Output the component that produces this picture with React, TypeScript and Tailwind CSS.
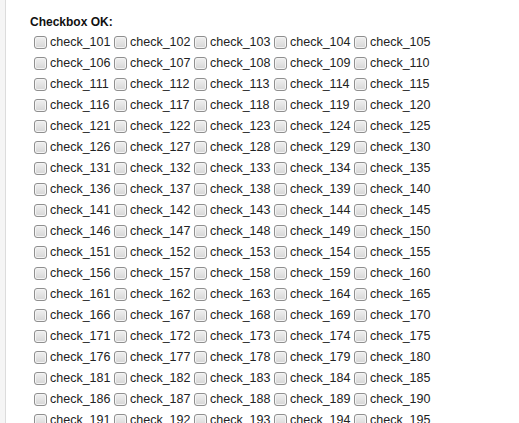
import React from "react";

function Box() {
  return (
    <span className="ml-[4px] mr-[3px] inline-block h-[13px] w-[13px] shrink-0 rounded-[3px] border border-[#8f8f8f] bg-gradient-to-b from-[#f0f0f0] to-[#d6d6d6] shadow-[inset_0_0_0_1px_#f4f4f4]" />
  );
}

export default function App() {
  const rows: number[][] = [];
  for (let r = 0; r < 19; r++) {
    const row: number[] = [];
    for (let c = 0; c < 5; c++) row.push(101 + r * 5 + c);
    rows.push(row);
  }
  return (
    <div
      className="flex h-[423px] w-[519px] overflow-hidden bg-white text-[#222]"
      style={{ fontFamily: '"Liberation Sans", Arial, sans-serif' }}
    >
      <div className="h-full w-[6px] shrink-0 border-r border-[#dcdcdc] bg-[#f5f5f5]" />
      <div className="pl-[24px] pt-[15px]">
        <div className="text-[12px] font-bold leading-[15px] text-[#111]">Checkbox OK:</div>
        <div className="mt-[2px] flex flex-col">
          {rows.map((row, i) => (
            <div key={i} className="grid h-[21px] grid-cols-[repeat(5,80px)] items-center">
              {row.map((n) => (
                <label key={n} className="flex items-center text-[12.5px] leading-[15px] whitespace-nowrap">
                  <Box />
                  <span>check_{n}</span>
                </label>
              ))}
            </div>
          ))}
        </div>
      </div>
    </div>
  );
}
